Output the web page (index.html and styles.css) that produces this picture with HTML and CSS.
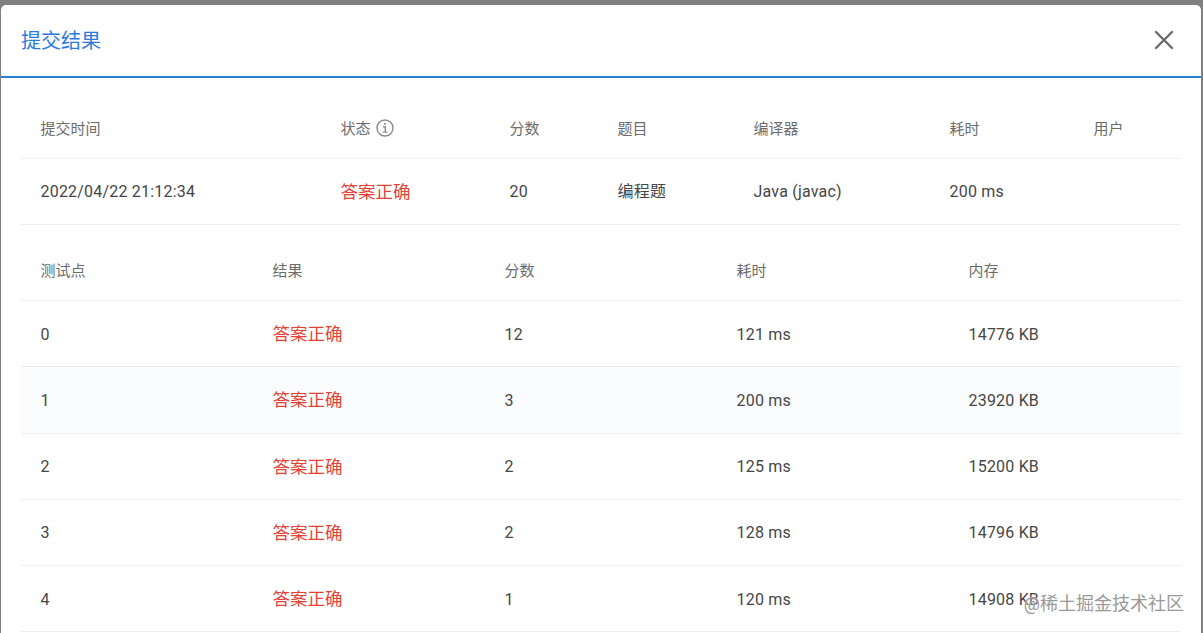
FILE: index.html
```html
<!DOCTYPE html>
<html lang="zh-CN">
<head>
    <meta charset="UTF-8">
    <meta name="viewport" content="width=device-width, initial-scale=1.0">
    <title>提交结果</title>
    <link rel="stylesheet" href="styles.css">
</head>
<body>
    <div class="modal">
        <div class="modal-header">
            <h3>提交结果</h3>
            <button class="close" aria-label="关闭">
                <svg width="20" height="20" viewBox="0 0 20 20">
                    <path d="M2 2L18 18M18 2L2 18" fill="none" stroke="#6b6b6b" stroke-width="2.4" stroke-linecap="round"/>
                </svg>
            </button>
        </div>

        <div class="modal-body">
            <div class="table summary">
                <div class="row head">
                    <span>提交时间</span>
                    <span class="status">状态
                        <svg width="18" height="18" viewBox="0 0 18 18" fill="none" stroke="#8c8c8c" stroke-width="1.4">
                            <circle cx="9" cy="9" r="8"/>
                            <path d="M7 7.7H9.3V13M6.7 13.1H11.5"/>
                            <circle cx="9" cy="5" r="1.1" fill="#8c8c8c" stroke="none"/>
                        </svg>
                    </span>
                    <span>分数</span>
                    <span>题目</span>
                    <span>编译器</span>
                    <span>耗时</span>
                    <span>用户</span>
                </div>
                <div class="row">
                    <span class="time">2022/04/22 21:12:34</span>
                    <span class="accepted">答案正确</span>
                    <span>20</span>
                    <span class="problem">编程题</span>
                    <span>Java (javac)</span>
                    <span>200 ms</span>
                    <span></span>
                </div>
            </div>

            <div class="table cases">
                <div class="row head">
                    <span>测试点</span>
                    <span>结果</span>
                    <span>分数</span>
                    <span>耗时</span>
                    <span>内存</span>
                </div>
                <div class="row">
                    <span>0</span>
                    <span class="accepted">答案正确</span>
                    <span>12</span>
                    <span>121 ms</span>
                    <span>14776 KB</span>
                </div>
                <div class="row active">
                    <span>1</span>
                    <span class="accepted">答案正确</span>
                    <span>3</span>
                    <span>200 ms</span>
                    <span>23920 KB</span>
                </div>
                <div class="row">
                    <span>2</span>
                    <span class="accepted">答案正确</span>
                    <span>2</span>
                    <span>125 ms</span>
                    <span>15200 KB</span>
                </div>
                <div class="row">
                    <span>3</span>
                    <span class="accepted">答案正确</span>
                    <span>2</span>
                    <span>128 ms</span>
                    <span>14796 KB</span>
                </div>
                <div class="row">
                    <span>4</span>
                    <span class="accepted">答案正确</span>
                    <span>1</span>
                    <span>120 ms</span>
                    <span>14908 KB</span>
                </div>
            </div>
        </div>
    </div>
    <div class="watermark">@稀土掘金技术社区</div>
</body>
</html>
```
FILE: styles.css
```css
* {
    box-sizing: border-box;
}

body {
    margin: 0;
    height: 633px;
    padding: 5px 2px 0 1px;
    overflow: hidden;
    background-color: #808080;
    color: #464646;
    font-family: Roboto, "Noto Sans CJK SC", sans-serif;
    font-size: 16px;
}

.modal {
    height: 640px;
    background-color: #fff;
    border-radius: 5px 5px 0 0;
}

.modal-header {
    display: flex;
    justify-content: space-between;
    align-items: center;
    height: 73px;
    padding: 0 27px 2px 20px;
    border-bottom: 2px solid #2580d2;
}

.modal-header h3 {
    margin: 0;
    color: #2a7ae0;
    font-size: 20px;
    font-weight: 400;
}

.close {
    display: flex;
    padding: 0;
    border: none;
    background: none;
    cursor: pointer;
}

.modal-body {
    padding: 20px 20px 0;
}

.row {
    display: grid;
    align-items: center;
    height: 66.2px;
    padding-left: 19.5px;
    border-bottom: 1px solid #efefef;
    letter-spacing: 0.2px;
}

.summary .row {
    grid-template-columns: 300px 169px 108px 136px 196px 144px 1fr;
}

.cases {
    margin-top: 16px;
}

.cases .row {
    grid-template-columns: repeat(5, 232px);
    padding-top: 1px;
}

.row.head {
    height: 61px;
    padding-top: 0;
    color: #6c6c6c;
    font-size: 15px;
    letter-spacing: 0;
}

.row.head span {
    padding-bottom: 2px;
}

.cases .row.head {
    height: 60px;
}

.row.active {
    background-color: #fafcfd;
    box-shadow: 0 -1px #e9ebed;
}

.status {
    display: flex;
    align-items: center;
    gap: 5px;
}

.status svg {
    margin-top: 2px;
}

.accepted {
    padding-bottom: 3px;
    color: #e54235;
    font-size: 17.5px;
    letter-spacing: 0;
}

.problem {
    padding-bottom: 3px;
}

.watermark {
    position: absolute;
    right: 19px;
    bottom: 16px;
    color: #999;
    font-size: 18px;
    line-height: 26px;
    text-shadow: 0 0 2px #fff;
}
```
